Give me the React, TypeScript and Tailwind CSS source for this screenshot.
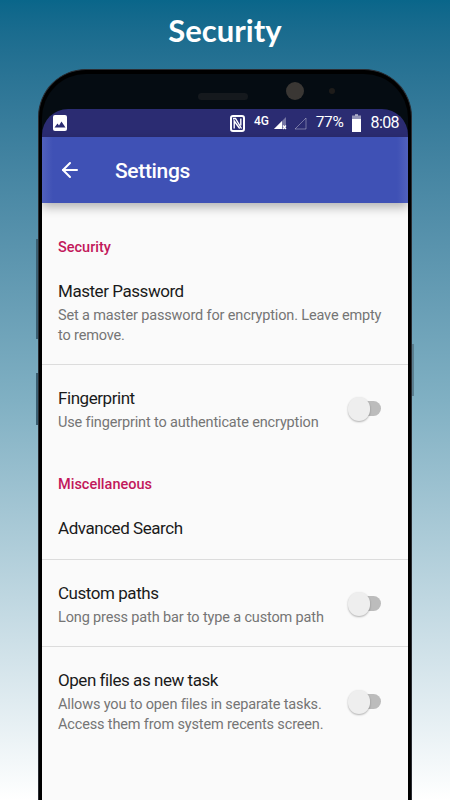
import { ArrowLeft } from 'lucide-react';

function Toggle() {
  return (
    <div className="relative w-[33px] h-[25px] shrink-0">
      <div className="absolute left-[8px] top-[4px] w-[25px] h-[15px] rounded-full bg-[#bcbcbc]" />
      <div className="absolute left-0 top-0 w-[22px] h-[24px] rounded-full bg-[#eeeeee] shadow-[0_1px_2px_rgba(0,0,0,0.3)]" />
    </div>
  );
}

function SectionLabel({ children, className }: { children: string; className: string }) {
  return (
    <div className={`pl-[16px] text-[14.5px] leading-[20px] font-medium text-[#c2185b] ${className}`}>
      {children}
    </div>
  );
}

function Title({ children }: { children: string }) {
  return <div className="text-[17px] leading-[24px] tracking-[-0.45px] text-[#1a1a1a]">{children}</div>;
}

function Summary({ children }: { children: React.ReactNode }) {
  return <div className="text-[14.5px] leading-[20px] tracking-[-0.15px] text-[#757575] mt-[3px] whitespace-nowrap">{children}</div>;
}

function StatusBar() {
  return (
    <div className="h-[28px] bg-[#2b2c72] rounded-t-[26px] flex items-center pl-[11px] pr-[9px] text-white">
      <svg width="14" height="16" viewBox="0 0 14 16">
        <rect width="14" height="16" rx="2" fill="#fff" />
        <path d="M1.5 12.5 L4.5 8.5 L6 10.5 L8.5 6.5 L12.5 12.5 Z" fill="#2b2c72" />
      </svg>
      <div className="ml-auto flex items-center">
        <svg width="15" height="17" viewBox="0 0 15 17">
          <rect x="1" y="1" width="13" height="15" rx="2" fill="none" stroke="#fff" strokeWidth="2" />
          <path d="M3 3.5h2.5l6 10" fill="none" stroke="#fff" strokeWidth="1.4" />
          <path d="M4.2 13.5V6l5.5 7.5M10.8 3.5v7" fill="none" stroke="#fff" strokeWidth="1.4" />
        </svg>
        <span className="ml-[9px] -mt-[5px] text-[12px] leading-none font-medium tracking-[-0.2px]">4G</span>
        <svg className="ml-[5px]" width="13" height="14" viewBox="0 0 13 14">
          <path d="M0 13 L12 1 V13 Z" fill="#fff" fillOpacity="0.35" />
          <path d="M0 13 L8 5 V13 Z" fill="#fff" />
          <path d="M9 9.5l3 3.5M12 9.5l-3 3.5" stroke="#fff" strokeWidth="1.2" />
        </svg>
        <svg className="ml-[7px]" width="13" height="14" viewBox="0 0 13 14">
          <path d="M1 13 L12 2 V13 Z" fill="none" stroke="#fff" strokeOpacity="0.35" strokeWidth="1" />
        </svg>
        <span className="ml-[9px] text-[15.5px] leading-none tracking-[-0.3px]">77%</span>
        <svg className="ml-[8px]" width="9" height="18" viewBox="0 0 9 18">
          <rect x="3" y="0" width="3" height="2" fill="#fff" fillOpacity="0.5" />
          <rect x="0" y="1.5" width="9" height="3.5" fill="#fff" fillOpacity="0.5" />
          <rect x="0" y="5" width="9" height="13" fill="#fff" />
        </svg>
        <span className="ml-[10px] text-[16px] leading-none tracking-[-0.6px]">8:08</span>
      </div>
    </div>
  );
}

function PhoneFrame({ children }: { children: React.ReactNode }) {
  return (
    <div className="relative mx-[38px] mt-[19px] h-[731px] rounded-t-[48px] bg-black pt-[4px] px-[3px] border-t border-x border-[#2a2d33]">
      <div className="absolute left-[-3px] top-[169px] w-[2px] h-[100px] bg-[#3a5f72]" />
      <div className="absolute left-[-3px] top-[303px] w-[2px] h-[52px] bg-[#3a5f72]" />
      <div className="absolute right-[-3px] top-[274px] w-[2px] h-[52px] bg-[#5b7f90]" />
      <div className="rounded-t-[44px] bg-[#050c12] overflow-hidden">
        <div className="h-[35px] flex items-center justify-center relative">
          <div className="w-[50px] h-[7px] rounded-full bg-[#15191d] mr-[4px] mt-[9px]" />
          <div className="absolute left-[244px] top-[8px] w-[18px] h-[18px] rounded-full bg-[#3a3734]" />
          <div className="absolute left-[287px] top-[14px] w-[6px] h-[6px] rounded-full bg-[#1e1c1a]" />
        </div>
        {children}
      </div>
    </div>
  );
}

export default function App() {
  return (
    <div
      className="w-[450px] h-[800px] overflow-hidden bg-gradient-to-b from-[#09668a] via-[#80b0c3] to-[#ffffff]"
      style={{ fontFamily: 'Roboto, sans-serif' }}
    >
      <div className="pt-[11px] h-[50px] text-center text-white text-[31px] leading-[38px] font-bold [font-family:Lato,sans-serif]">
        Security
      </div>
      <PhoneFrame>
        <StatusBar />
        <div className="h-[66px] bg-[linear-gradient(90deg,#5060bc,#3f51b5_3%,#3f51b5_97%,#5060bc)] flex items-center shadow-[0_4px_10px_rgba(0,0,0,0.3)] relative text-white">
          <ArrowLeft className="ml-[16px]" size={24} strokeWidth={2} />
          <span className="ml-[33px] mt-[2px] text-[21px] font-medium leading-none tracking-[-0.35px]">Settings</span>
        </div>
        <div className="bg-[#fafafa] h-[597px]">
          <SectionLabel className="pt-[35px]">Security</SectionLabel>
          <div className="pl-[16px] pr-[20px] pt-[21px] pb-[18px] border-b border-[#dcdcdc]">
            <Title>Master Password</Title>
            <Summary>
              Set a master password for encryption. Leave empty
              <br />
              to remove.
            </Summary>
          </div>
          <div className="pl-[16px] pr-[27px] pt-[21px] flex items-center justify-between">
            <div>
              <Title>Fingerprint</Title>
              <Summary>Use fingerprint to authenticate encryption</Summary>
            </div>
            <Toggle />
          </div>
          <SectionLabel className="pt-[42px]">Miscellaneous</SectionLabel>
          <div className="pl-[16px] pt-[21px] pb-[19px] border-b border-[#dcdcdc]">
            <Title>Advanced Search</Title>
          </div>
          <div className="pl-[16px] pr-[27px] pt-[21px] pb-[18px] border-b border-[#dcdcdc] flex items-center justify-between">
            <div>
              <Title>Custom paths</Title>
              <Summary>Long press path bar to type a custom path</Summary>
            </div>
            <Toggle />
          </div>
          <div className="pl-[16px] pr-[27px] pt-[21px] flex items-start justify-between">
            <div>
              <Title>Open files as new task</Title>
              <Summary>
                Allows you to open files in separate tasks.
                <br />
                Access them from system recents screen.
              </Summary>
            </div>
            <div className="mt-[22px]"><Toggle /></div>
          </div>
        </div>
      </PhoneFrame>
    </div>
  );
}
